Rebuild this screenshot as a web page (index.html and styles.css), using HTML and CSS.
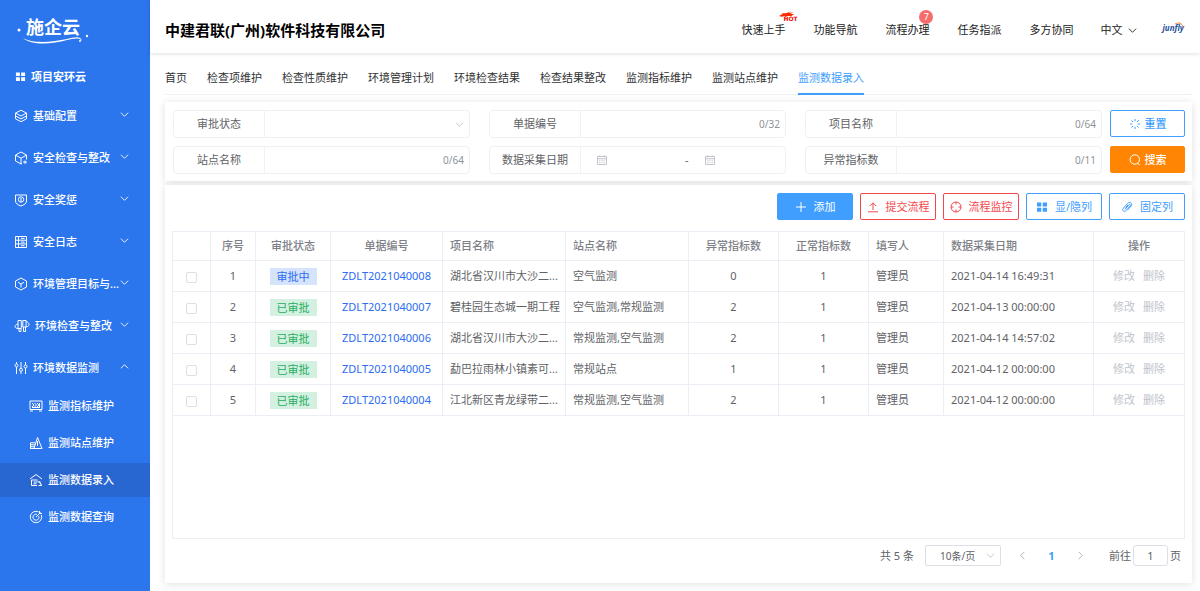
FILE: index.html
```
<!DOCTYPE html>
<html lang="zh-CN">
<head>
  <meta charset="UTF-8">
  <title>监测数据录入</title>
  <link rel="stylesheet" href="styles.css">
</head>
<body>
  <!-- icon set -->
  <svg class="sprite" width="0" height="0">
    <symbol id="down" viewBox="0 0 10 10"><path d="M1 3l4 4 4-4"/></symbol>
    <symbol id="up" viewBox="0 0 10 10"><path d="M1 7l4-4 4 4"/></symbol>
    <symbol id="left" viewBox="0 0 10 10"><path d="M7 1L3 5l4 4"/></symbol>
    <symbol id="right" viewBox="0 0 10 10"><path d="M3 1l4 4-4 4"/></symbol>
    <symbol id="grid" viewBox="0 0 12 12"><path fill="currentColor" stroke="none" d="M1 1.5h4.3v4H1zM6.7 1.5H11v4H6.700zM1 6.800h4.300v4H1zM6.700 6.800H11v4H6.700z"/></symbol>
    <symbol id="layers" viewBox="0 0 14 14"><path d="M7 1.200l5.500 2.900L7 7 1.500 4.100zM1.500 7L7 9.900 12.500 7M1.500 9.800L7 12.700l5.500-2.900M1.500 4.100v5.700M12.500 4.100v5.700"/></symbol>
    <symbol id="cube-plus" viewBox="0 0 14 14"><path d="M8 12.500l-1 .5-5.500-3V4L7 1l5.500 3v4.500M2 4.400l5 2.800 5-2.800M7 7.200V13M9 11h4M11 9.500v3.500"/></symbol>
    <symbol id="shield" viewBox="0 0 14 14"><path d="M1.500 2h11v6c0 2.500-2.500 4-5.500 5-3-1-5.500-2.500-5.500-5z"/><circle cx="7" cy="6.500" r="2.700"/><path d="M7 5v4"/></symbol>
    <symbol id="log" viewBox="0 0 14 14"><path d="M1.500 1.500h11v11h-11zM1.500 5.200h11M1.500 8.900h11M4.500 1.500v11M7 3.400h3.500M7 7.100h3.500M7 10.700h3.500"/></symbol>
    <symbol id="cube" viewBox="0 0 14 14"><path d="M7 1l5.500 3v6L7 13l-5.500-3V4zM4 5.300L7 7l3-1.700M7 7v3.500"/></symbol>
    <symbol id="tubes" viewBox="0 0 16 14"><path d="M4 1.500h3.300v8H4zM8.800 1.500h3.300v6.500H8.800zM4 5C2 5.500 1 6.500 1 7.500s1 2 3 2M12.100 2.500c2 .5 2.900 1.800 2.900 3s-1 2.300-2.900 2.500M5 9.500v3h2v-3M9.500 8v4.500h2V8"/></symbol>
    <symbol id="sliders" viewBox="0 0 14 14"><path d="M2.500 1v2M2.500 6v7M7 1v6M7 10.500V13M11.500 1v3M11.500 7v6"/><circle cx="2.500" cy="4.500" r="1.500"/><circle cx="7" cy="8.800" r="1.500"/><circle cx="11.500" cy="5.500" r="1.500"/></symbol>
    <symbol id="board" viewBox="0 0 14 14"><path d="M1 2h12v8.500H1zM1 12h3M10 12h3M3 4l2 2-2 2M5.500 4l2 2-2 2M8 4l2 2-2 2M10.500 4v4M3 8.500h8"/></symbol>
    <symbol id="station" viewBox="0 0 14 14"><path d="M5 12.500L8.500 1.500l4.500 11zM1.500 12.500V6.800h4.800M1.500 8.800h4.500M1.500 10.700h4M1 12.500h12M8.500 5v5"/></symbol>
    <symbol id="entry" viewBox="0 0 14 14"><path d="M1 6l6-4.500L13 6M2.500 7h6M2.500 7v5.500H8M4.500 9h4M4.500 10.800h3M12.500 12.500H9.500M8.500 8l4 3.500M10.500 8l2 4.500"/></symbol>
    <symbol id="target" viewBox="0 0 14 14"><path d="M12.300 5A5.700 5.700 0 1 1 9.500 1.900M9.800 6.200A3 3 0 1 1 7.800 4.300M7 7l4.500-4.500M10.500 1v2.500H13"/></symbol>
    <symbol id="reset" viewBox="0 0 12 12"><path d="M6 1v2.200M6 8.800V11M1 6h2.200M8.800 6H11M2.500 2.500L4 4M8 8l1.500 1.500M2.500 9.500L4 8M8 4l2-2"/></symbol>
    <symbol id="search" viewBox="0 0 12 12"><circle cx="5.800" cy="5.500" r="4.700"/><path d="M8.800 9.200l2 2"/></symbol>
    <symbol id="plus" viewBox="0 0 12 12"><path d="M6 1v10M1 6h10"/></symbol>
    <symbol id="upload" viewBox="0 0 12 12"><path d="M6 9V2M2.800 5L6 1.800 9.200 5M1 10.800h10"/></symbol>
    <symbol id="aim" viewBox="0 0 12 12"><circle cx="6" cy="6" r="5"/><path d="M6 1v2.500M6 8.500V11M1 6h2.500M8.500 6H11"/></symbol>
    <symbol id="clip" viewBox="0 0 12 12"><path d="M4 8.200l4-4.400c.8-.9 2 .1 1.200 1.100l-4.500 5c-1.500 1.500-4-.6-2.600-2.300l4.800-5.400c2-2 5 .5 3.300 2.700L6.500 9.100M4.700 6.500L7 4"/></symbol>
    <symbol id="date" viewBox="0 0 10 10"><path d="M.5 1.500h9v8h-9zM.5 3.800h9M2.800.2v2M7.200.2v2M2.200 5.800h1.200M4.400 5.800h1.200M6.600 5.800h1.200M2.200 7.700h1.200M4.400 7.700h1.200M6.600 7.700h1.200"/></symbol>
  </svg>

  <div class="layout">
    <aside class="sidebar">
      <div class="logo">
        <span class="logo-text">施企云</span>
        <svg class="logo-line" viewBox="0 0 76 26">
          <path d="M7 16c10 6 30 4 44 1 8-2 14-3 15 2-3-4-9-2-15-1-15 4-35 6-44-2z"/>
          <circle cx="3" cy="8" r="1.500"/><circle cx="71" cy="14" r="1.200"/><circle cx="64" cy="19" r="1"/>
        </svg>
      </div>
      <div class="module"><svg class="icon-m"><use href="#grid"/></svg>项目安环云</div>
      <ul class="menu">
        <li><a href="#"><svg class="icon"><use href="#layers"/></svg><span>基础配置</span><svg class="arrow"><use href="#down"/></svg></a></li>
        <li><a href="#"><svg class="icon"><use href="#cube-plus"/></svg><span>安全检查与整改</span><svg class="arrow"><use href="#down"/></svg></a></li>
        <li><a href="#"><svg class="icon"><use href="#shield"/></svg><span>安全奖惩</span><svg class="arrow"><use href="#down"/></svg></a></li>
        <li><a href="#"><svg class="icon"><use href="#log"/></svg><span>安全日志</span><svg class="arrow"><use href="#down"/></svg></a></li>
        <li><a href="#"><svg class="icon"><use href="#cube"/></svg><span>环境管理目标与...</span><svg class="arrow"><use href="#down"/></svg></a></li>
        <li><a href="#"><svg class="icon icon-wide"><use href="#tubes"/></svg><span>环境检查与整改</span><svg class="arrow"><use href="#down"/></svg></a></li>
        <li><a href="#"><svg class="icon"><use href="#sliders"/></svg><span>环境数据监测</span><svg class="arrow"><use href="#up"/></svg></a></li>
      </ul>
      <ul class="submenu">
        <li><a href="#"><svg class="icon"><use href="#board"/></svg>监测指标维护</a></li>
        <li><a href="#"><svg class="icon"><use href="#station"/></svg>监测站点维护</a></li>
        <li><a href="#" class="active"><svg class="icon"><use href="#entry"/></svg>监测数据录入</a></li>
        <li><a href="#"><svg class="icon"><use href="#target"/></svg>监测数据查询</a></li>
      </ul>
    </aside>

    <div class="main">
      <header class="header">
        <h1>中建君联(广州)软件科技有限公司</h1>
        <nav class="top-nav">
          <a href="#">快速上手
            <span class="hot"><svg class="flame" viewBox="0 0 18 8"><path d="M0 5l4-2-1-1 5 0 5-2-2 2 5-1-3 2 4 0-3 2H9L6 8 7 5 3 6z"/></svg><b>HOT</b></span>
          </a>
          <a href="#">功能导航</a>
          <a href="#">流程办理<span class="badge">7</span></a>
          <a href="#">任务指派</a>
          <a href="#">多方协同</a>
        </nav>
        <button class="lang" type="button">中文<svg class="arrow"><use href="#down"/></svg></button>
        <div class="brand">junfly<svg class="brand-arc" viewBox="0 0 10 6"><path d="M1 2c4-2 7-1 8 3"/></svg></div>
      </header>

      <div class="content">
        <nav class="tabs">
          <a href="#">首页</a>
          <a href="#">检查项维护</a>
          <a href="#">检查性质维护</a>
          <a href="#">环境管理计划</a>
          <a href="#">环境检查结果</a>
          <a href="#">检查结果整改</a>
          <a href="#">监测指标维护</a>
          <a href="#">监测站点维护</a>
          <a href="#" class="active">监测数据录入</a>
        </nav>

        <form class="card filter">
          <div class="fields">
            <div class="field">
              <label for="status">审批状态</label>
              <select id="status"><option></option></select>
              <svg class="arrow"><use href="#down"/></svg>
            </div>
            <div class="field">
              <label for="billNo">单据编号</label>
              <input type="text" id="billNo" maxlength="32"><span class="count">0/32</span>
            </div>
            <div class="field">
              <label for="project">项目名称</label>
              <input type="text" id="project" maxlength="64"><span class="count">0/64</span>
            </div>
            <div class="field">
              <label for="site">站点名称</label>
              <input type="text" id="site" maxlength="64"><span class="count">0/64</span>
            </div>
            <div class="field range">
              <label for="dateFrom">数据采集日期</label>
              <svg class="date"><use href="#date"/></svg>
              <input type="text" id="dateFrom" class="from">
              <span>-</span>
              <svg class="date"><use href="#date"/></svg>
              <input type="text" id="dateTo" aria-label="结束日期">
            </div>
            <div class="field">
              <label for="abnormal">异常指标数</label>
              <input type="text" id="abnormal" maxlength="11"><span class="count">0/11</span>
            </div>
          </div>
          <div class="filter-btns">
            <button type="reset" class="btn btn-blue strong"><svg><use href="#reset"/></svg>重置</button>
            <button type="button" class="btn btn-orange strong"><svg><use href="#search"/></svg>搜索</button>
          </div>
        </form>

        <section class="card list">
          <div class="toolbar">
            <button type="button" class="btn btn-primary"><svg><use href="#plus"/></svg>添加</button>
            <button type="button" class="btn btn-red"><svg><use href="#upload"/></svg>提交流程</button>
            <button type="button" class="btn btn-red"><svg><use href="#aim"/></svg>流程监控</button>
            <button type="button" class="btn btn-blue"><svg><use href="#grid"/></svg>显/隐列</button>
            <button type="button" class="btn btn-blue"><svg><use href="#clip"/></svg>固定列</button>
          </div>

          <div class="table-box">
            <table>
              <colgroup>
                <col class="w-check"><col class="w-index"><col class="w-status"><col class="w-bill">
                <col><col>
                <col class="w-num"><col class="w-num"><col class="w-user"><col class="w-date"><col class="w-ops">
              </colgroup>
              <thead>
                <tr>
                  <th></th><th>序号</th><th>审批状态</th><th>单据编号</th>
                  <th class="left">项目名称</th><th class="left">站点名称</th>
                  <th>异常指标数</th><th>正常指标数</th>
                  <th class="left">填写人</th><th class="left">数据采集日期</th><th>操作</th>
                </tr>
              </thead>
              <tbody>
                <tr>
                  <td><input type="checkbox" aria-label="选择 1"></td><td>1</td>
                  <td><span class="tag tag-blue">审批中</span></td>
                  <td><a href="#">ZDLT2021040008</a></td>
                  <td class="left">湖北省汉川市大沙二...</td><td class="left">空气监测</td>
                  <td>0</td><td>1</td><td class="left">管理员</td><td class="left">2021-04-14 16:49:31</td>
                  <td class="ops"><button type="button" disabled>修改</button><button type="button" disabled>删除</button></td>
                </tr>
                <tr>
                  <td><input type="checkbox" aria-label="选择 2"></td><td>2</td>
                  <td><span class="tag tag-green">已审批</span></td>
                  <td><a href="#">ZDLT2021040007</a></td>
                  <td class="left">碧桂园生态城一期工程</td><td class="left">空气监测,常规监测</td>
                  <td>2</td><td>1</td><td class="left">管理员</td><td class="left">2021-04-13 00:00:00</td>
                  <td class="ops"><button type="button" disabled>修改</button><button type="button" disabled>删除</button></td>
                </tr>
                <tr>
                  <td><input type="checkbox" aria-label="选择 3"></td><td>3</td>
                  <td><span class="tag tag-green">已审批</span></td>
                  <td><a href="#">ZDLT2021040006</a></td>
                  <td class="left">湖北省汉川市大沙二...</td><td class="left">常规监测,空气监测</td>
                  <td>2</td><td>1</td><td class="left">管理员</td><td class="left">2021-04-14 14:57:02</td>
                  <td class="ops"><button type="button" disabled>修改</button><button type="button" disabled>删除</button></td>
                </tr>
                <tr>
                  <td><input type="checkbox" aria-label="选择 4"></td><td>4</td>
                  <td><span class="tag tag-green">已审批</span></td>
                  <td><a href="#">ZDLT2021040005</a></td>
                  <td class="left">勐巴拉雨林小镇素可...</td><td class="left">常规站点</td>
                  <td>1</td><td>1</td><td class="left">管理员</td><td class="left">2021-04-12 00:00:00</td>
                  <td class="ops"><button type="button" disabled>修改</button><button type="button" disabled>删除</button></td>
                </tr>
                <tr>
                  <td><input type="checkbox" aria-label="选择 5"></td><td>5</td>
                  <td><span class="tag tag-green">已审批</span></td>
                  <td><a href="#">ZDLT2021040004</a></td>
                  <td class="left">江北新区青龙绿带二...</td><td class="left">常规监测,空气监测</td>
                  <td>2</td><td>1</td><td class="left">管理员</td><td class="left">2021-04-12 00:00:00</td>
                  <td class="ops"><button type="button" disabled>修改</button><button type="button" disabled>删除</button></td>
                </tr>
              </tbody>
            </table>
          </div>

          <div class="pagination">
            <span>共 5 条</span>
            <div class="page-size">
              <select aria-label="每页条数"><option>10条/页</option></select>
              <svg class="arrow"><use href="#down"/></svg>
            </div>
            <div class="pager">
              <button type="button" aria-label="上一页"><svg class="arrow"><use href="#left"/></svg></button>
              <button type="button" class="current">1</button>
              <button type="button" aria-label="下一页"><svg class="arrow"><use href="#right"/></svg></button>
            </div>
            <label class="jump">前往<input type="text" value="1">页</label>
          </div>
        </section>
      </div>
    </div>
  </div>
</body>
</html>
```

FILE: styles.css
```
* {
  box-sizing: border-box;
}

body {
  margin: 0;
  font-family: "Noto Sans", "Noto Sans CJK SC", sans-serif;
  font-size: 11px;
  line-height: 16px;
  color: #606266;
  background-color: #fff;
}

a {
  color: inherit;
  text-decoration: none;
}

ul {
  list-style: none;
  margin: 0;
  padding: 0;
}

button,
input,
select {
  font: inherit;
  color: inherit;
}

svg {
  fill: none;
  stroke: currentColor;
  flex-shrink: 0;
}

.sprite {
  position: absolute;
}

.arrow {
  width: 9px;
  height: 9px;
}

.layout {
  display: flex;
  min-height: 100vh;
}

/* sidebar */
.sidebar {
  width: 150px;
  flex-shrink: 0;
  background-color: #2b75ed;
  color: #fff;
}

.logo {
  position: relative;
  height: 58px;
  padding: 14px 0 0 26px;
}

.logo-text {
  font-size: 18px;
  line-height: 26px;
  font-weight: bold;
}

.logo-line {
  position: absolute;
  left: 16px;
  top: 22px;
  width: 76px;
  height: 26px;
  fill: #fff;
  stroke: none;
}

.module {
  display: flex;
  align-items: center;
  gap: 5px;
  height: 37px;
  padding-left: 15px;
  font-weight: bold;
}

.icon-m {
  width: 11px;
  height: 11px;
}

.icon {
  width: 14px;
  height: 14px;
}

.icon-wide {
  width: 16px;
}

.menu a {
  display: flex;
  align-items: center;
  gap: 5px;
  height: 42px;
  padding: 0 21px 0 14px;
  white-space: nowrap;
  font-weight: 500;
}

.menu .arrow {
  margin-bottom: 3px;
}

.menu span {
  flex: 1;
  width: 0;
}

.submenu a {
  display: flex;
  align-items: center;
  gap: 5px;
  height: 34px;
  margin-bottom: 3px;
  padding-left: 29px;
  font-weight: 500;
}

.submenu a.active {
  background-color: #2867d1;
}

/* header */
.main {
  flex: 1;
  min-width: 0;
  display: flex;
  flex-direction: column;
}

.header {
  display: flex;
  align-items: center;
  height: 53px;
  padding: 7px 16px 0 15px;
  color: #222;
  box-shadow: 0 1px 4px rgba(0, 0, 0, 0.12);
}

.header h1 {
  flex: 1;
  margin: 0;
  font-size: 15px;
  line-height: 22px;
  color: #000;
}

.top-nav {
  display: flex;
  gap: 28px;
}

.top-nav a {
  position: relative;
}

.hot {
  position: absolute;
  left: 38px;
  top: -11px;
  width: 20px;
  color: #f10b00;
}

.flame {
  position: absolute;
  left: 0;
  top: 0;
  width: 16px;
  height: 8px;
  fill: #ff2a00;
  stroke: none;
}

.hot b {
  position: absolute;
  left: 4px;
  top: 4px;
  font: bold 6px/8px "DejaVu Sans", sans-serif;
}

.badge {
  position: absolute;
  right: -4px;
  top: -12px;
  width: 14px;
  height: 14px;
  border-radius: 7px;
  background-color: #f56c6c;
  color: #fff;
  font-size: 9px;
  line-height: 14px;
  text-align: center;
}

.lang {
  display: flex;
  align-items: center;
  gap: 6px;
  margin: 0 25px 0 27px;
  padding: 0;
  border: none;
  background: none;
}

.brand {
  position: relative;
  padding-bottom: 4px;
  color: #1d4f9c;
  font: italic bold 8px/12px "Open Sans", sans-serif;
}

.brand-arc {
  position: absolute;
  right: 0;
  top: 0;
  width: 10px;
  height: 6px;
  stroke: #f0803c;
}

/* tabs */
.content {
  flex: 1;
  display: flex;
  flex-direction: column;
  padding: 8px 8px 8px 15px;
}

.tabs {
  display: flex;
  gap: 20px;
  border-bottom: 1px solid #f0f1f4;
  margin-bottom: 7px;
  color: #303133;
}

.tabs a {
  height: 34px;
  line-height: 34px;
  margin-bottom: -1px;
}

.tabs a.active {
  color: #409eff;
  border-bottom: 2px solid #409eff;
}

.card {
  background-color: #fff;
  box-shadow: 0 1px 8px rgba(0, 0, 0, 0.12);
}

/* filter */
.filter {
  display: flex;
  gap: 8px;
  padding: 8px 7px 7px 8px;
  margin-bottom: 4px;
}

.fields {
  flex: 1;
  min-width: 0;
  display: grid;
  grid-template-columns: repeat(3, minmax(0, 1fr));
  gap: 8px 19px;
}

.field {
  display: flex;
  align-items: center;
  height: 28px;
  padding-right: 5px;
  border: 1px solid #eff0f3;
  border-radius: 4px;
}

.field label {
  width: 91px;
  flex-shrink: 0;
  line-height: 26px;
  text-align: center;
  border-right: 1px solid #eff0f3;
}

.field input,
.field select {
  flex: 1;
  min-width: 0;
  height: 24px;
  border: none;
  outline: none;
  background: none;
  appearance: none;
}

.field .from {
  flex: none;
  width: 78px;
}

.field .arrow,
.page-size .arrow {
  color: #c0c4cc;
}

.count {
  font-size: 10px;
  color: #909399;
}

.date {
  width: 10px;
  height: 10px;
  margin-left: 16px;
  color: #c0c4cc;
}

.filter-btns {
  display: flex;
  flex-direction: column;
  gap: 9px;
}

.btn {
  display: flex;
  align-items: center;
  justify-content: center;
  gap: 7px;
  width: 76px;
  height: 27px;
  padding: 0;
  border: 1px solid;
  border-radius: 2px;
  background-color: #fff;
  cursor: pointer;
}

.btn svg {
  width: 12px;
  height: 12px;
}

.btn.strong {
  width: 75px;
  gap: 4px;
  font-weight: 500;
}

.btn-blue {
  color: #409eff;
}

.btn-red {
  color: #f5474b;
}

.btn-primary {
  color: #fff;
  background-color: #409eff;
  border-color: #409eff;
}

.btn-orange {
  color: #fff;
  background-color: #ff8503;
  border-color: #ff8503;
}

/* list */
.list {
  flex: 1;
  display: flex;
  flex-direction: column;
  padding: 8px 7px 17px;
}

.toolbar {
  display: flex;
  justify-content: flex-end;
  gap: 7px;
  margin-bottom: 11px;
}

.table-box {
  flex: 1;
  border: 1px solid #ebeef5;
}

table {
  width: 100%;
  table-layout: fixed;
  border-collapse: separate;
  border-spacing: 0;
}

th,
td {
  height: 31px;
  padding: 0;
  text-align: center;
  white-space: nowrap;
  border-right: 1px solid #ebeef5;
  border-bottom: 1px solid #ebeef5;
}

th {
  height: 29px;
  font-weight: 500;
  color: #7d8087;
}

th:last-child,
td:last-child {
  border-right: none;
}

.left {
  padding-left: 7px;
  text-align: left;
}

.w-check { width: 38px; }
.w-index { width: 45px; }
.w-status { width: 75px; }
.w-bill { width: 112px; }
.w-num { width: 90px; }
.w-user { width: 75px; }
.w-date { width: 150px; }
.w-ops { width: 90px; }

td a {
  color: #2b6cf0;
}

td input {
  display: block;
  appearance: none;
  width: 11px;
  height: 11px;
  margin: 2px auto 0;
  border: 1px solid #dcdfe6;
  border-radius: 2px;
}

.tag {
  display: block;
  width: 47px;
  margin: 0 auto;
  line-height: 17px;
}

.tag-blue {
  color: #2b6cf0;
  background-color: #d5e3fc;
}

.tag-green {
  color: #27ae60;
  background-color: #d3f0e0;
}

.ops button {
  padding: 0;
  margin: 0 4px;
  border: none;
  background: none;
  color: #c0c4cc;
}

/* pagination */
.pagination {
  display: flex;
  align-items: center;
  justify-content: flex-end;
  height: 21px;
  margin-top: 6px;
  padding-right: 4px;
}

.page-size {
  display: flex;
  align-items: center;
  width: 76px;
  height: 21px;
  margin: 0 7px 0 11px;
  padding: 0 5px 0 14px;
  border: 1px solid #dcdfe6;
  border-radius: 2px;
  font-size: 10px;
}

.page-size select {
  flex: 1;
  min-width: 0;
  padding: 0;
  border: none;
  background: none;
  appearance: none;
}

.pager {
  display: flex;
  margin-right: 14px;
}

.pager button {
  width: 29px;
  height: 21px;
  padding: 0;
  border: none;
  background: none;
  color: #a8abb2;
}

.pager .current {
  color: #409eff;
  font-weight: bold;
}

.jump {
  display: flex;
  align-items: center;
  gap: 2px;
}

.jump input {
  width: 35px;
  height: 21px;
  text-align: center;
  border: 1px solid #dcdfe6;
  border-radius: 3px;
}
```
